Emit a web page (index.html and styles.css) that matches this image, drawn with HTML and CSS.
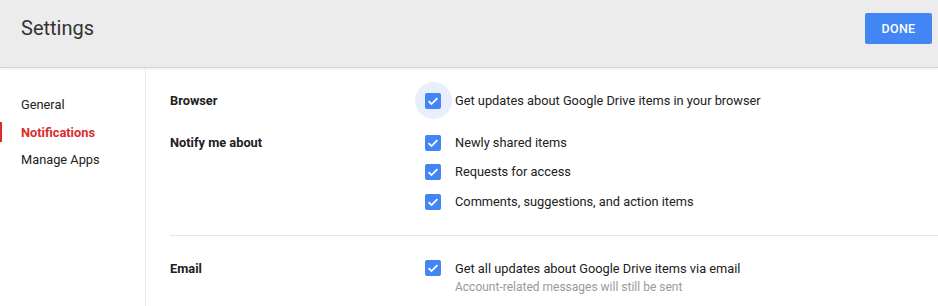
FILE: index.html
```html
<!DOCTYPE html>
<html>
<head>
<meta charset="utf-8">
<link rel="stylesheet" href="styles.css">
</head>
<body>
<header class="topbar">
  <h1 class="title">Settings</h1>
  <button class="done">DONE</button>
</header>
<div class="main">
  <nav class="sidebar">
    <div class="nav-item">General</div>
    <div class="nav-item active">Notifications</div>
    <div class="nav-item">Manage Apps</div>
  </nav>
  <div class="content">
    <section class="section">
      <div class="label">Browser</div>
      <div class="options">
        <div class="option"><span class="cb focus"><span class="box"><svg viewBox="0 0 16 16"><path d="M3.6 8.2l2.9 2.9 5.9-5.9" /></svg></span></span><span class="text">Get updates about Google Drive items in your browser</span></div>
      </div>
    </section>
    <section class="section sep">
      <div class="label">Notify me about</div>
      <div class="options">
        <div class="option"><span class="cb"><span class="box"><svg viewBox="0 0 16 16"><path d="M3.6 8.2l2.9 2.9 5.9-5.9" /></svg></span></span><span class="text">Newly shared items</span></div>
        <div class="option"><span class="cb"><span class="box"><svg viewBox="0 0 16 16"><path d="M3.6 8.2l2.9 2.9 5.9-5.9" /></svg></span></span><span class="text">Requests for access</span></div>
        <div class="option"><span class="cb"><span class="box"><svg viewBox="0 0 16 16"><path d="M3.6 8.2l2.9 2.9 5.9-5.9" /></svg></span></span><span class="text">Comments, suggestions, and action items</span></div>
      </div>
    </section>
    <section class="section email">
      <div class="label">Email</div>
      <div class="options">
        <div class="option top"><span class="cb"><span class="box"><svg viewBox="0 0 16 16"><path d="M3.6 8.2l2.9 2.9 5.9-5.9" /></svg></span></span><div class="text"><div>Get all updates about Google Drive items via email</div><div class="sub">Account-related messages will still be sent</div></div></div>
      </div>
    </section>
  </div>
</div>
</body>
</html>
```
FILE: styles.css
```css
* { box-sizing: border-box; }
html, body { margin: 0; padding: 0; }
body {
  font-family: Roboto, "Noto Sans", Arial, sans-serif;
  font-size: 12.8px;
  color: #212121;
  background: #fff;
  width: 938px;
  height: 306px;
  overflow: hidden;
}
.topbar {
  height: 68px;
  background: #ececec;
  border-bottom: 1px solid #d2d2d2;
  box-shadow: 0 1px 2px rgba(0,0,0,0.08);
  display: flex;
  align-items: center;
  justify-content: space-between;
  padding: 0 6px 12px 21px;
  position: relative;
  z-index: 1;
}
.title {
  margin: 0;
  margin-top: 1px;
  font-size: 20px;
  font-weight: 400;
  color: #333;
}
.done {
  width: 67px;
  height: 31px;
  border: 0;
  border-radius: 2px;
  background: #4285f4;
  color: #fff;
  font-family: inherit;
  font-size: 12.5px;
  font-weight: 500;
  letter-spacing: 0.3px;
  margin-top: 1px;
}
.main {
  display: flex;
  height: 238px;
}
.sidebar {
  width: 146px;
  border-right: 1px solid #ebebeb;
  padding-top: 23px;
  flex-shrink: 0;
}
.nav-item {
  height: 27.5px;
  line-height: 27.5px;
  padding-left: 21px;
  color: #212121;
  position: relative;
}
.nav-item.active {
  color: #dd2c2c;
  font-weight: 700;
}
.nav-item.active::before {
  content: "";
  position: absolute;
  left: 0;
  top: 3px;
  width: 2px;
  height: 20px;
  background: #dd2c2c;
}
.content {
  flex: 1;
  padding-left: 24px;
  padding-top: 18px;
}
.section {
  display: flex;
}
.section.sep {
  margin-top: 12px;
  padding-bottom: 18px;
  border-bottom: 1px solid #e6e6e6;
}
.section.email {
  padding-top: 24px;
}
.label {
  width: 255px;
  flex-shrink: 0;
  font-weight: 700;
  height: 30px;
  line-height: 30px;
  color: #212121;
}
.email .label { line-height: 18px; height: 18px; }
.options { flex: 1; }
.option {
  display: flex;
  align-items: center;
  height: 29.5px;
}
.option.top { align-items: flex-start; height: auto; }
.cb {
  width: 16px;
  height: 16px;
  margin-right: 14px;
  position: relative;
  flex-shrink: 0;
}
.option.top .cb { margin-top: 0; }
.cb.focus::before {
  content: "";
  position: absolute;
  left: -10.5px;
  top: -10.5px;
  width: 37px;
  height: 37px;
  border-radius: 50%;
  background: #e8eefc;
}
.box {
  position: absolute;
  inset: 0;
  background: #4285f4;
  border-radius: 2px;
  display: block;
}
.box svg {
  width: 16px;
  height: 16px;
  display: block;
}
.box path {
  fill: none;
  stroke: #fff;
  stroke-width: 1.8;
}
.text { line-height: 18px; color: #212121; }
.sub { font-size: 12px; color: #9a9a9a; line-height: 18px; }
```
